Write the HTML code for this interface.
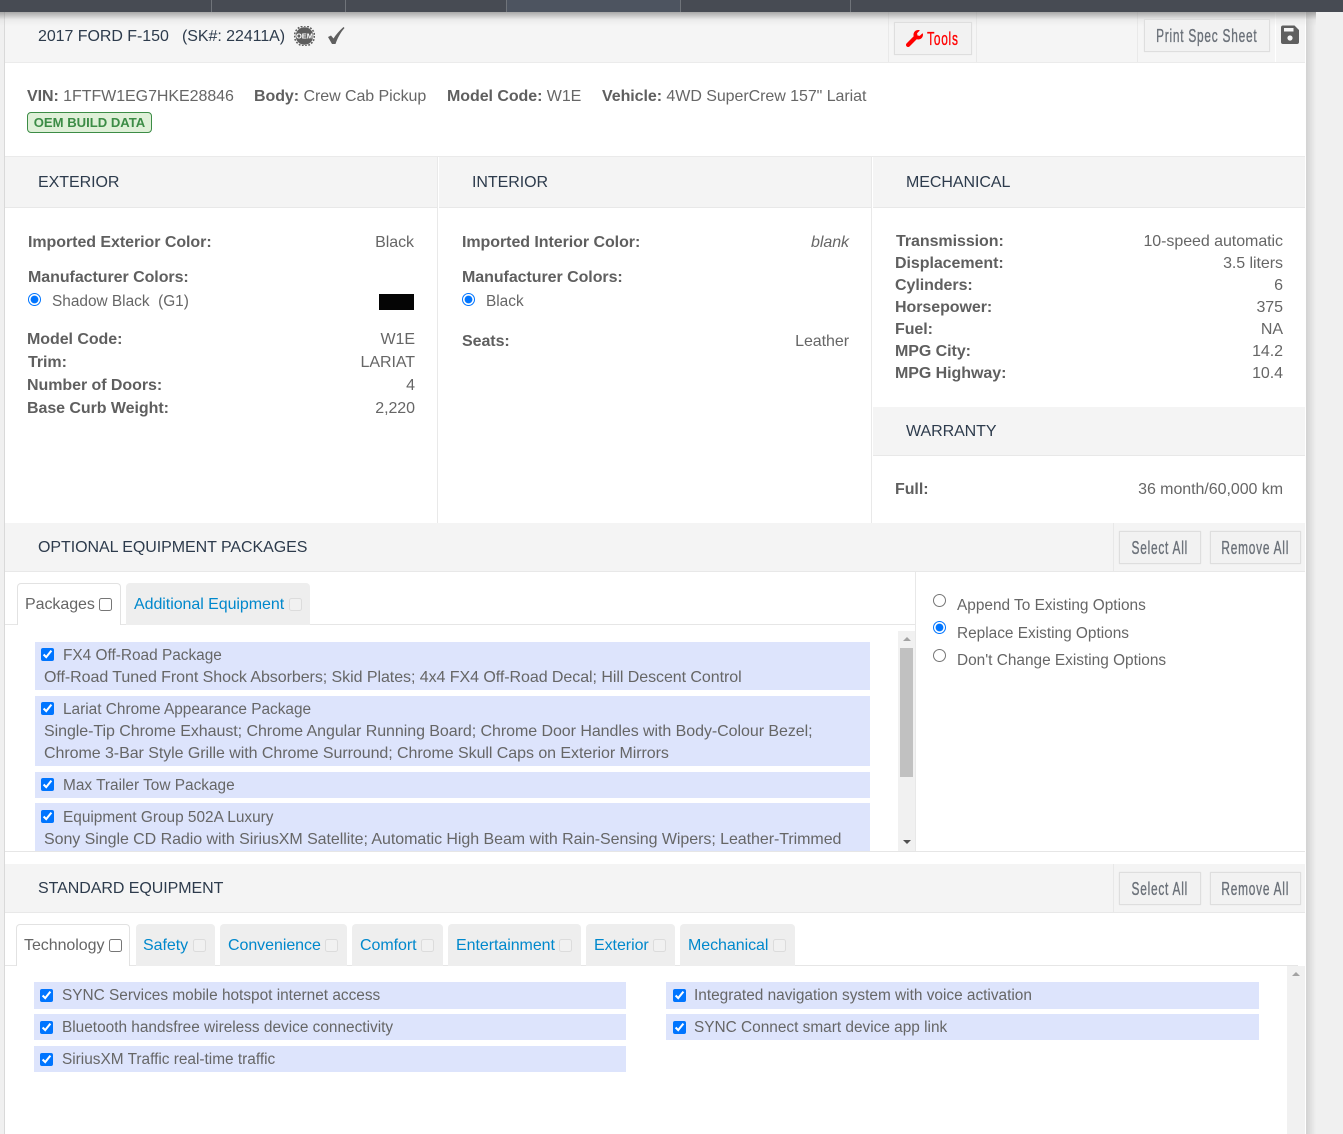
<!DOCTYPE html>
<html><head><meta charset="utf-8"><title>2017 FORD F-150</title>
<style>
html,body{margin:0;padding:0;width:1343px;height:1134px;overflow:hidden;background:#f0f0f0;font-family:"Liberation Sans",Arial,sans-serif;font-size:16px;color:#666}
*{box-sizing:border-box}
.a{position:absolute}
.t{position:absolute;white-space:nowrap;line-height:20px;height:20px;letter-spacing:-.055px}
.s{font-size:15.4px;letter-spacing:0}
.r{text-align:right}
.h{color:#2d3b4c}
b{font-weight:700;color:#5f5f5f}
.bar{position:absolute;background:#f4f4f4;border-bottom:1px solid #e8e8e8}
.vl{position:absolute;width:1px;background:#e9e9e9}
.btn{position:absolute;display:flex;align-items:center;justify-content:center;background:#f2f2f2;border:1px solid #dedede;box-shadow:0 0 1px #e5e5e5;font-size:18px;color:#6a7078;white-space:nowrap;overflow:hidden;padding-top:1px}
.btn span{display:inline-block;flex:none;transform:scaleX(.66);letter-spacing:1.15px;line-height:20px;-webkit-text-stroke:.35px currentColor}
.row{position:absolute;background:#dde4fc}
input{position:absolute;margin:0;width:13px;height:13px}
.cb{accent-color:#0075ff}
.tab{position:absolute;height:42px;background:#eee;border-radius:4px 4px 0 0}
.tab.on{background:#fff;border:1px solid #e2e2e2;border-bottom:0}
.tl{color:#0088cc}
</style></head>
<body>
<!-- top bar -->
<div class="a" style="left:0;top:0;width:1343px;height:12px;background:#474b53"></div>
<div class="a" style="left:507px;top:0;width:173px;height:12px;background:#4d5460"></div>
<div class="a" style="left:211px;top:0;width:1px;height:12px;background:#70747a"></div>
<div class="a" style="left:345px;top:0;width:1px;height:12px;background:#70747a"></div>
<div class="a" style="left:506px;top:0;width:1px;height:12px;background:#70747a"></div>
<div class="a" style="left:680px;top:0;width:1px;height:12px;background:#70747a"></div>
<div class="a" style="left:850px;top:0;width:1px;height:12px;background:#70747a"></div>

<!-- panel -->
<div class="a" style="left:4px;top:12px;width:1px;height:1122px;background:#d9d9d9"></div>
<div class="a" style="left:5px;top:12px;width:1301px;height:1122px;background:#fff"></div>
<div class="a" style="left:1306px;top:12px;width:10px;height:1122px;background:linear-gradient(to right,#d2d2d2,#f0f0f0)"></div>

<!-- header -->
<div class="bar" style="left:5px;top:12px;width:1300px;height:51px;background:#f5f5f5;border-bottom:1px solid #ebebeb"></div>
<div class="vl" style="left:888px;top:12px;height:50px"></div>
<div class="vl" style="left:976px;top:12px;height:50px"></div>
<div class="vl" style="left:1137px;top:12px;height:50px"></div>
<div class="a" style="left:1275px;top:12px;width:1px;height:50px;background:#fff"></div>
<div class="a" style="left:0;top:12px;width:1316px;height:14px;background:linear-gradient(to bottom,rgba(120,120,120,.62),rgba(200,200,200,.22) 55%,rgba(240,240,240,0))"></div>

<div class="t h" style="left:38px;top:27px">2017 FORD F-150</div>
<div class="t h" style="left:182px;top:27px">(SK#: 22411A)</div>
<svg class="a" style="left:294px;top:26px" width="21" height="20" viewBox="0 0 21 20">
<circle cx="10.5" cy="10" r="8.8" fill="#5d5d5d"/>
<circle cx="10.5" cy="10" r="10" fill="none" stroke="#5d5d5d" stroke-width="1.6" stroke-dasharray="1.8 1.5"/>
<text x="10.5" y="12.6" font-size="7.5" font-weight="700" text-anchor="middle" fill="#fff" font-family="Liberation Sans">OEM</text></svg>
<svg class="a" style="left:327px;top:26px" width="18" height="20" viewBox="0 0 18 20"><path d="M1 11 L4 9.500 L6.500 12.500 C9 8.500 12.500 4.500 16.500 1 L17.500 2 C13.500 6.500 10.500 12 8.500 18 L5 18 Z" fill="#5f5f5f"/></svg>

<div class="btn" style="left:894px;top:22px;width:78px;height:33px;color:#ff0000;padding-left:20px"><span>Tools</span></div>
<svg class="a" style="left:906px;top:30px" width="17" height="17" viewBox="0 0 512 512"><path fill="#ff0000" d="M507.700 109.100c-2.200-9-13.500-12.100-20.100-5.500l-74.400 74.400-67.900-11.300-11.300-67.900 74.400-74.400c6.600-6.600 3.400-17.900-5.700-20.200-47.400-11.700-99.600.9-136.600 37.900-39.600 39.600-50.500 97.100-34.100 147.200L18.700 402.800c-25 25-25 65.500 0 90.500 25 25 65.500 25 90.500 0l213.200-213.200c50.100 16.700 107.500 5.700 147.400-34.200 37.100-37.100 49.700-89.300 37.900-136.800z"/></svg>

<div class="btn" style="left:1144px;top:19px;width:126px;height:33px"><span>Print Spec Sheet</span></div>
<svg class="a" style="left:1281px;top:25px" width="18" height="19" viewBox="0 0 18 19"><path fill="#5f5f5f" d="M2 0.500 H13.500 L18 5 V17 A2 2 0 0 1 16 19 H2 A2 2 0 0 1 0 17 V2.500 A2 2 0 0 1 2 0.500 Z"/><rect x="3" y="3" width="9.500" height="3.500" fill="#f5f5f5"/><circle cx="9" cy="13" r="2.600" fill="#f5f5f5"/></svg>

<!-- VIN -->
<div class="t" style="left:27px;top:87px"><b>VIN:</b> 1FTFW1EG7HKE28846</div>
<div class="t" style="left:254px;top:87px"><b>Body:</b> Crew Cab Pickup</div>
<div class="t" style="left:447px;top:87px"><b>Model Code:</b> W1E</div>
<div class="t" style="left:602px;top:87px"><b>Vehicle:</b> 4WD SuperCrew 157" Lariat</div>
<div class="a" style="left:27px;top:112px;width:125px;height:21px;background:#dff0d8;border:1px solid #3c8c46;border-radius:4px;color:#3c8c46;font-weight:700;font-size:13.1px;line-height:19px;text-align:center;white-space:nowrap">OEM BUILD DATA</div>

<!-- section bars -->
<div class="a" style="left:5px;top:156px;width:1300px;height:1px;background:#eaeaea"></div>
<div class="bar" style="left:5px;top:157px;width:432px;height:51px"></div>
<div class="bar" style="left:439px;top:157px;width:432px;height:51px"></div>
<div class="bar" style="left:873px;top:157px;width:432px;height:51px"></div>
<div class="vl" style="left:437px;top:157px;height:366px"></div>
<div class="vl" style="left:871px;top:157px;height:366px"></div>
<div class="t h" style="left:38px;top:173px">EXTERIOR</div>
<div class="t h" style="left:472px;top:173px">INTERIOR</div>
<div class="t h" style="left:906px;top:173px">MECHANICAL</div>

<!-- exterior -->
<div class="t" style="left:28px;top:233px"><b>Imported Exterior Color:</b></div>
<div class="t r" style="left:214px;width:200px;top:233px">Black</div>
<div class="t" style="left:28px;top:268px"><b>Manufacturer Colors:</b></div>
<input type="radio" class="cb" checked style="left:28px;top:293px">
<div class="t s" style="left:52px;top:292px">Shadow Black&nbsp; (G1)</div>
<div class="a" style="left:379px;top:294px;width:35px;height:16px;background:#050505"></div>
<div class="t" style="left:27px;top:330px"><b>Model Code:</b></div><div class="t r" style="left:215px;width:200px;top:330px">W1E</div>
<div class="t" style="left:28px;top:353px"><b>Trim:</b></div><div class="t r" style="left:215px;width:200px;top:353px">LARIAT</div>
<div class="t" style="left:27px;top:376px"><b>Number of Doors:</b></div><div class="t r" style="left:215px;width:200px;top:376px">4</div>
<div class="t" style="left:27px;top:399px"><b>Base Curb Weight:</b></div><div class="t r" style="left:215px;width:200px;top:399px">2,220</div>

<!-- interior -->
<div class="t" style="left:462px;top:233px"><b>Imported Interior Color:</b></div>
<div class="t r" style="left:649px;width:200px;top:233px;font-style:italic">blank</div>
<div class="t" style="left:462px;top:268px"><b>Manufacturer Colors:</b></div>
<input type="radio" class="cb" checked style="left:462px;top:293px">
<div class="t s" style="left:486px;top:292px">Black</div>
<div class="t" style="left:462px;top:332px"><b>Seats:</b></div><div class="t r" style="left:649px;width:200px;top:332px">Leather</div>

<!-- mechanical -->
<div class="t" style="left:896px;top:232px"><b>Transmission:</b></div><div class="t r" style="left:1083px;width:200px;top:232px">10-speed automatic</div>
<div class="t" style="left:895px;top:254px"><b>Displacement:</b></div><div class="t r" style="left:1083px;width:200px;top:254px">3.5 liters</div>
<div class="t" style="left:895px;top:276px"><b>Cylinders:</b></div><div class="t r" style="left:1083px;width:200px;top:276px">6</div>
<div class="t" style="left:895px;top:298px"><b>Horsepower:</b></div><div class="t r" style="left:1083px;width:200px;top:298px">375</div>
<div class="t" style="left:895px;top:320px"><b>Fuel:</b></div><div class="t r" style="left:1083px;width:200px;top:320px">NA</div>
<div class="t" style="left:895px;top:342px"><b>MPG City:</b></div><div class="t r" style="left:1083px;width:200px;top:342px">14.2</div>
<div class="t" style="left:895px;top:364px"><b>MPG Highway:</b></div><div class="t r" style="left:1083px;width:200px;top:364px">10.4</div>

<div class="bar" style="left:873px;top:407px;width:432px;height:49px"></div>
<div class="t h" style="left:906px;top:422px">WARRANTY</div>
<div class="t" style="left:895px;top:480px"><b>Full:</b></div><div class="t r" style="left:1083px;width:200px;top:480px">36 month/60,000 km</div>

<!-- optional -->
<div class="bar" style="left:5px;top:523px;width:1300px;height:49px"></div>
<div class="a" style="left:1113px;top:523px;width:1px;height:48px;background:#e8e8e8"></div>
<div class="t h" style="left:38px;top:538px">OPTIONAL EQUIPMENT PACKAGES</div>
<div class="btn" style="left:1119px;top:531px;width:82px;height:33px"><span>Select All</span></div>
<div class="btn" style="left:1210px;top:531px;width:91px;height:33px"><span>Remove All</span></div>

<div class="a" style="left:5px;top:624px;width:910px;height:1px;background:#e6e6e6"></div>
<div class="tab on" style="left:17px;top:583px;width:104px"></div>
<div class="t" style="left:25px;top:595px">Packages</div>
<input type="checkbox" style="left:99px;top:598px">
<div class="tab" style="left:126px;top:583px;width:184px"></div>
<div class="t tl" style="left:134px;top:595px">Additional Equipment</div>
<input type="checkbox" disabled style="left:289px;top:598px;opacity:.55">

<div class="row" style="left:35px;top:642px;width:835px;height:48px"></div>
<input type="checkbox" class="cb" checked style="left:41px;top:648px">
<div class="t s" style="left:63px;top:646px">FX4 Off-Road Package</div>
<div class="t" style="left:44px;top:668px">Off-Road Tuned Front Shock Absorbers; Skid Plates; 4x4 FX4 Off-Road Decal; Hill Descent Control</div>

<div class="row" style="left:35px;top:696px;width:835px;height:70px"></div>
<input type="checkbox" class="cb" checked style="left:41px;top:702px">
<div class="t s" style="left:63px;top:700px">Lariat Chrome Appearance Package</div>
<div class="t" style="left:44px;top:722px">Single-Tip Chrome Exhaust; Chrome Angular Running Board; Chrome Door Handles with Body-Colour Bezel;</div>
<div class="t" style="left:44px;top:744px">Chrome 3-Bar Style Grille with Chrome Surround; Chrome Skull Caps on Exterior Mirrors</div>

<div class="row" style="left:35px;top:772px;width:835px;height:26px"></div>
<input type="checkbox" class="cb" checked style="left:41px;top:778px">
<div class="t s" style="left:63px;top:776px">Max Trailer Tow Package</div>

<div class="row" style="left:35px;top:803px;width:835px;height:48px"></div>
<input type="checkbox" class="cb" checked style="left:41px;top:810px">
<div class="t s" style="left:63px;top:808px">Equipment Group 502A Luxury</div>
<div class="t" style="left:44px;top:830px">Sony Single CD Radio with SiriusXM Satellite; Automatic High Beam with Rain-Sensing Wipers; Leather-Trimmed</div>

<!-- scrollbar 1 -->
<div class="a" style="left:898px;top:631px;width:17px;height:220px;background:#f1f1f1"></div>
<div class="a" style="left:900px;top:648px;width:13px;height:129px;background:#c1c1c1"></div>
<div class="a" style="left:903px;top:637px;width:0;height:0;border-left:4px solid transparent;border-right:4px solid transparent;border-bottom:4px solid #a3a3a3"></div>
<div class="a" style="left:903px;top:840px;width:0;height:0;border-left:4px solid transparent;border-right:4px solid transparent;border-top:4px solid #505050"></div>

<div class="a" style="left:915px;top:572px;width:1px;height:279px;background:#e8e8e8"></div>
<input type="radio" style="left:933px;top:594px">
<div class="t s" style="left:957px;top:596px">Append To Existing Options</div>
<input type="radio" class="cb" checked style="left:933px;top:621px">
<div class="t s" style="left:957px;top:624px">Replace Existing Options</div>
<input type="radio" style="left:933px;top:649px">
<div class="t s" style="left:957px;top:651px">Don't Change Existing Options</div>

<div class="a" style="left:5px;top:851px;width:1300px;height:1px;background:#e6e6e6"></div>

<!-- standard -->
<div class="bar" style="left:5px;top:864px;width:1300px;height:49px"></div>
<div class="a" style="left:1113px;top:864px;width:1px;height:48px;background:#e8e8e8"></div>
<div class="t h" style="left:38px;top:879px">STANDARD EQUIPMENT</div>
<div class="btn" style="left:1119px;top:872px;width:82px;height:33px"><span>Select All</span></div>
<div class="btn" style="left:1210px;top:872px;width:91px;height:33px"><span>Remove All</span></div>

<div class="a" style="left:5px;top:965px;width:1293px;height:1px;background:#e6e6e6"></div>
<div class="tab on" style="left:16px;top:924px;width:114px"></div>
<div class="t" style="left:24px;top:936px">Technology</div>
<input type="checkbox" style="left:109px;top:939px">
<div class="tab" style="left:136px;top:924px;width:79px"></div>
<div class="t tl" style="left:143px;top:936px">Safety</div>
<input type="checkbox" disabled style="left:193px;top:939px;opacity:.55">
<div class="tab" style="left:220px;top:924px;width:127px"></div>
<div class="t tl" style="left:228px;top:936px">Convenience</div>
<input type="checkbox" disabled style="left:325px;top:939px;opacity:.55">
<div class="tab" style="left:352px;top:924px;width:91px"></div>
<div class="t tl" style="left:360px;top:936px">Comfort</div>
<input type="checkbox" disabled style="left:421px;top:939px;opacity:.55">
<div class="tab" style="left:448px;top:924px;width:133px"></div>
<div class="t tl" style="left:456px;top:936px">Entertainment</div>
<input type="checkbox" disabled style="left:559px;top:939px;opacity:.55">
<div class="tab" style="left:586px;top:924px;width:89px"></div>
<div class="t tl" style="left:594px;top:936px">Exterior</div>
<input type="checkbox" disabled style="left:653px;top:939px;opacity:.55">
<div class="tab" style="left:680px;top:924px;width:115px"></div>
<div class="t tl" style="left:688px;top:936px">Mechanical</div>
<input type="checkbox" disabled style="left:773px;top:939px;opacity:.55">

<div class="row" style="left:34px;top:982px;width:592px;height:27px"></div>
<input type="checkbox" class="cb" checked style="left:40px;top:989px">
<div class="t s" style="left:62px;top:986px">SYNC Services mobile hotspot internet access</div>
<div class="row" style="left:34px;top:1014px;width:592px;height:26px"></div>
<input type="checkbox" class="cb" checked style="left:40px;top:1021px">
<div class="t s" style="left:62px;top:1018px">Bluetooth handsfree wireless device connectivity</div>
<div class="row" style="left:34px;top:1046px;width:592px;height:26px"></div>
<input type="checkbox" class="cb" checked style="left:40px;top:1053px">
<div class="t s" style="left:62px;top:1050px">SiriusXM Traffic real-time traffic</div>

<div class="row" style="left:666px;top:982px;width:593px;height:27px"></div>
<input type="checkbox" class="cb" checked style="left:673px;top:989px">
<div class="t s" style="left:694px;top:986px">Integrated navigation system with voice activation</div>
<div class="row" style="left:666px;top:1014px;width:593px;height:26px"></div>
<input type="checkbox" class="cb" checked style="left:673px;top:1021px">
<div class="t s" style="left:694px;top:1018px">SYNC Connect smart device app link</div>

<!-- scrollbar 2 -->
<div class="a" style="left:1287px;top:966px;width:18px;height:168px;background:#f1f1f1"></div>
<div class="a" style="left:1292px;top:972px;width:0;height:0;border-left:4px solid transparent;border-right:4px solid transparent;border-bottom:4px solid #a3a3a3"></div>
</body></html>
